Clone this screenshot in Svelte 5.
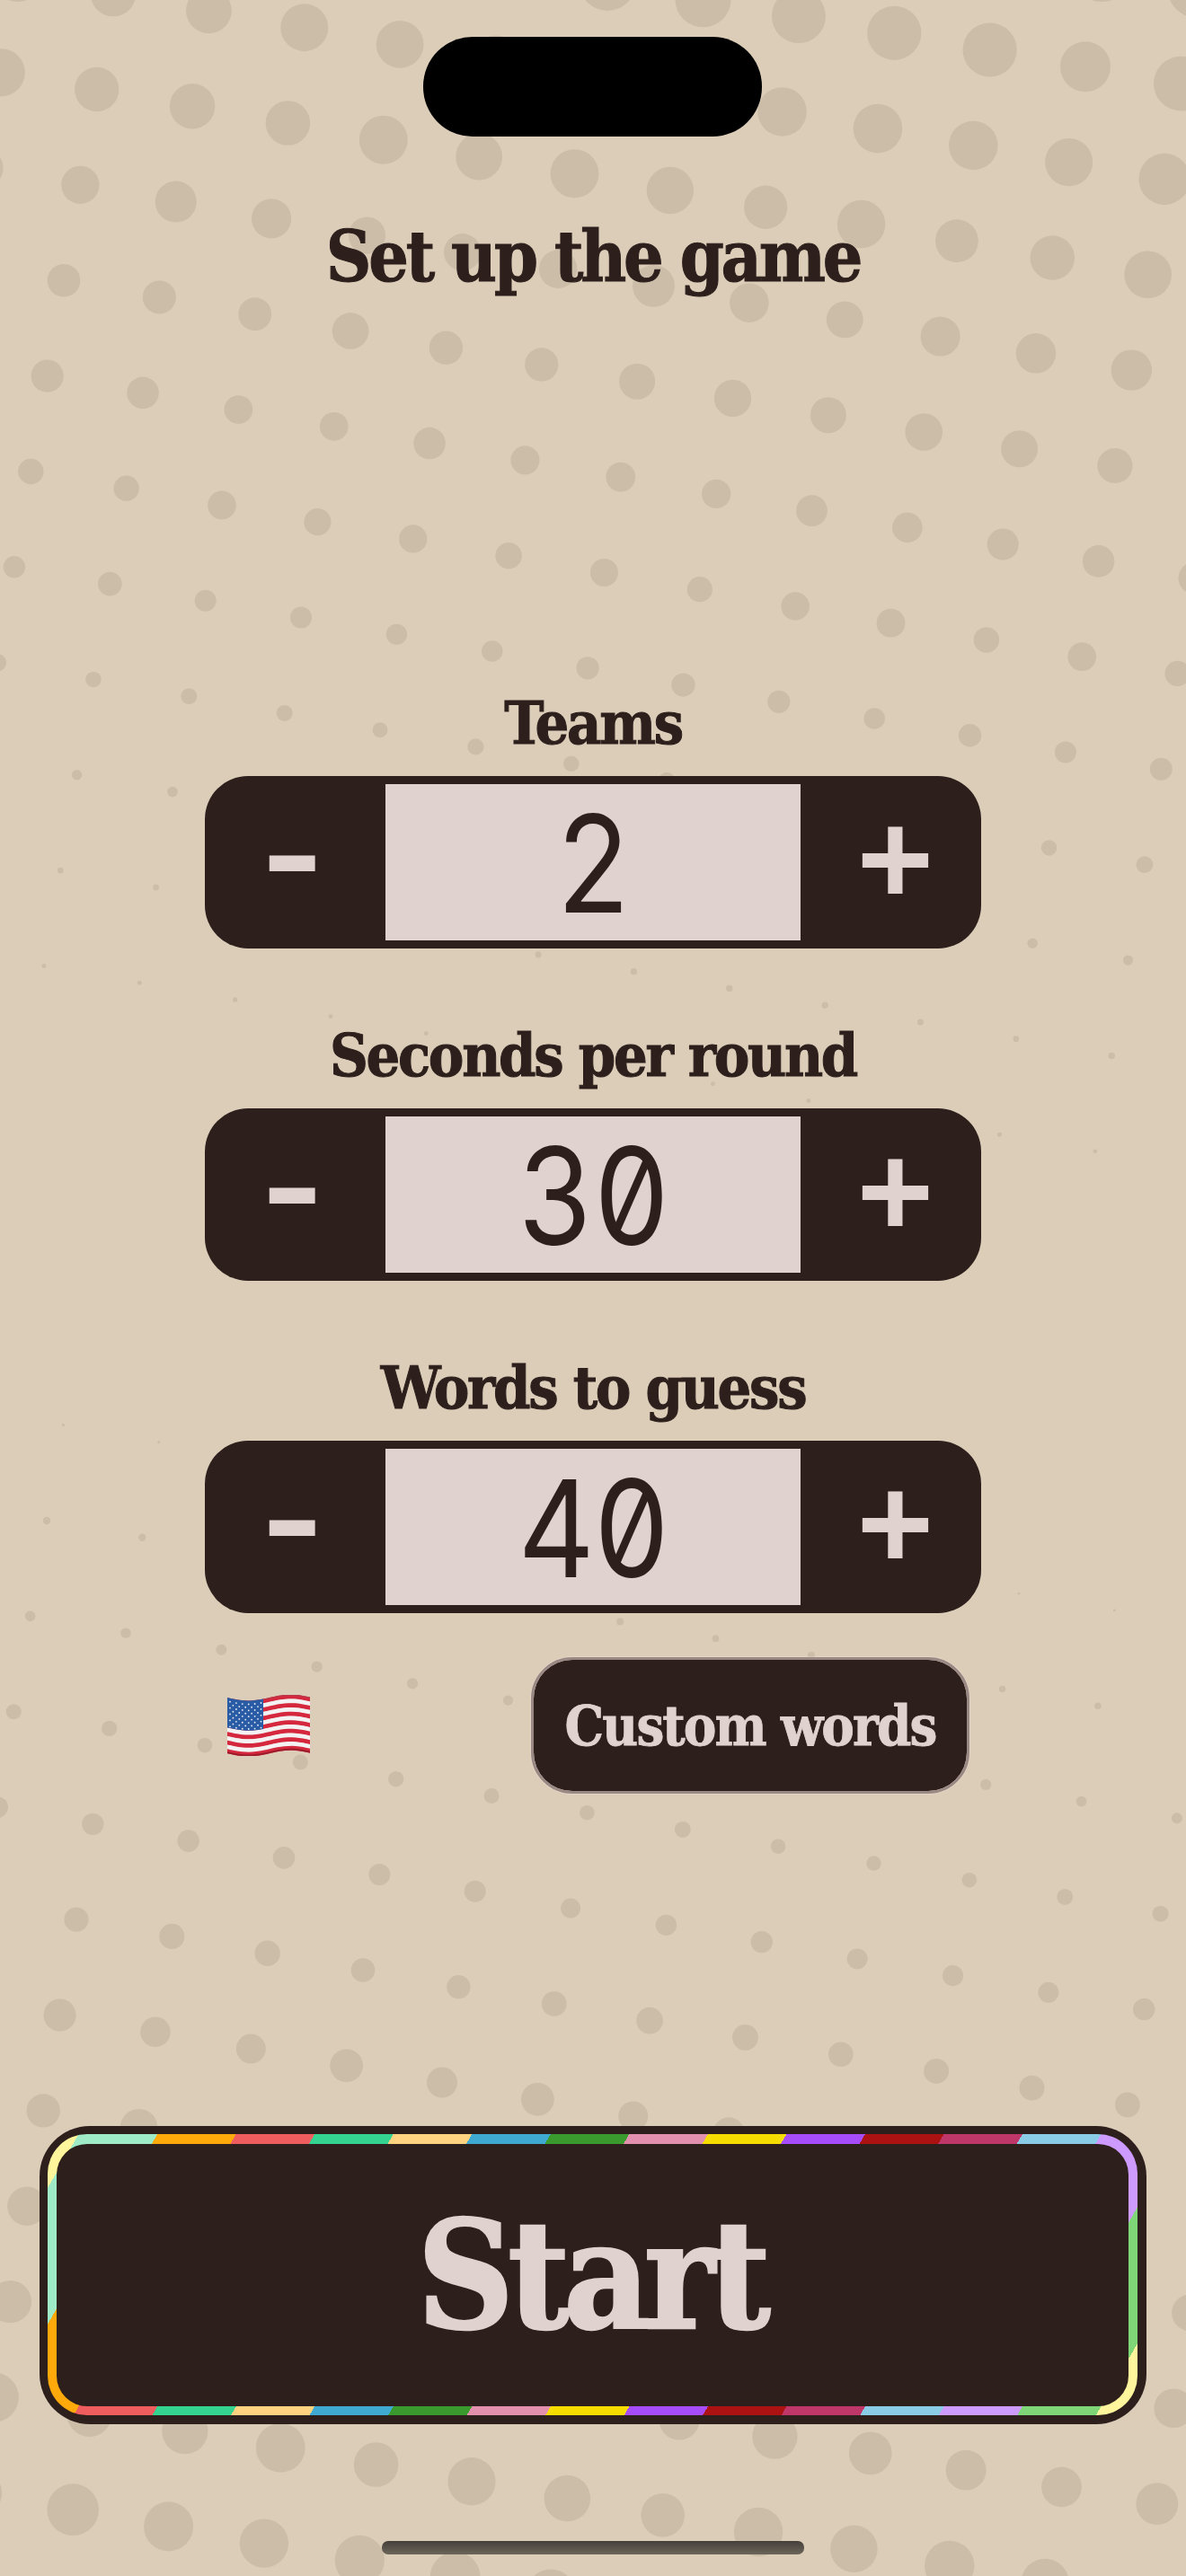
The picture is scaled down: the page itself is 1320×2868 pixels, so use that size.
<script>
  const rows = [[-245,64],[-137,60],[-29,54],[79,51],[187,44],[295,39],[403,34],[511,30],[619,25],[727,18],[835,11],[943,7],[1051,5],[1551,3],[1659,8],[1767,12],[1875,17],[1983,23],[2091,28],[2199,35],[2307,40],[2415,46],[2523,48],[2631,52],[2739,58],[2847,62],[2955,65]];
  const dots = [];
  rows.forEach(([v, d], j) => {
    const step = (v - 79) / 108;
    for (let k = -8; k < 18; k++) {
      const x = 107.7 + k * 106.36 - step * 18.35;
      const y = 99.5 + k * 18.75 + step * 106.36;
      if (x < -50 || x > 1370 || y < -50 || y > 2920) continue;
      const n = Math.sin(k * 12.9898 + j * 78.233) * 43758.5453;
      const jitter = 1 + 0.14 * ((n - Math.floor(n)) - 0.5);
      dots.push({ x, y, r: (d * jitter) / 2 });
    }
  });

  const steppers = [
    { label: 'Teams', value: '2' },
    { label: 'Seconds per round', value: '30' },
    { label: 'Words to guess', value: '40' }
  ];

  const wave = (x) => 3.4 * Math.sin((2 * Math.PI * x) / 94);
  const band = (x0, x1, y0, y1) => {
    let d = `M${x0} ${(y0 + wave(x0)).toFixed(2)}`;
    for (let x = x0 + 4; x <= x1; x += 4) d += `L${x} ${(y0 + wave(x)).toFixed(2)}`;
    for (let x = x1; x >= x0; x -= 4) d += `L${x} ${(y1 + wave(x)).toFixed(2)}`;
    return d + 'Z';
  };
  const stripeH = 62 / 13;
  const stripes = Array.from({ length: 13 }, (_, i) => ({
    d: band(0, 92, 3 + i * stripeH, 3 + (i + 1) * stripeH + 0.2),
    fill: i % 2 ? '#f3f1f2' : '#d5283e'
  }));
  const stars = [];
  for (let r = 0; r < 9; r++) {
    const n = r % 2 ? 5 : 6;
    for (let c = 0; c < n; c++) {
      const x = (r % 2 ? 6.4 : 3) + c * 6.9;
      stars.push({ x, y: 7 + r * 3.45 + wave(x) });
    }
  }
</script>

<main class="page">
  <svg class="dots" width="1320" height="2868" viewBox="0 0 1320 2868" aria-hidden="true">
    {#each dots as dot}
      <circle cx={dot.x} cy={dot.y} r={dot.r} />
    {/each}
  </svg>

  <div class="island"></div>

  <h1>Set up the game</h1>

  <section class="settings">
    {#each steppers as s}
      <div class="setting">
        <h2>{s.label}</h2>
        <div class="stepper">
          <button class="step minus"><span>-</span></button>
          <div class="value"><span>{s.value}</span></div>
          <button class="step plus">+</button>
        </div>
      </div>
    {/each}
  </section>

  <div class="extras">
    <svg class="flag" width="94" height="68" viewBox="0 0 94 68" aria-label="United States">
      {#each stripes as st}
        <path d={st.d} fill={st.fill} />
      {/each}
      <path d={band(0, 40, 3, 3 + 7 * stripeH)} fill="#2a5ca6" />
      {#each stars as star}
        <circle cx={star.x} cy={star.y} r="0.9" fill="#e8edf5" />
      {/each}
      <path d={band(0, 92, 3 + 13 * stripeH - 2, 3 + 13 * stripeH)} fill="#9c1c2c" />
      <path d={band(40, 92, 3, 4.4)} fill="#b9394a" />
    </svg>
    <button class="custom">Custom words</button>
  </div>

  <div class="start-wrap">
    <button class="start">
      <span class="ring"><span class="core">Start</span></span>
    </button>
  </div>

  <div class="home"></div>
</main>

<style>
  :global(body) {
    margin: 0;
  }
  .page {
    position: relative;
    width: 1320px;
    height: 2868px;
    overflow: hidden;
    background: #dccdb8;
    display: flex;
    flex-direction: column;
    align-items: center;
    color: #2c1f1c;
    font-family: "DejaVu Serif Condensed", "DejaVu Serif", serif;
    box-sizing: border-box;
    padding-top: 236px;
  }
  .dots {
    position: absolute;
    inset: 0;
  }
  .dots circle {
    fill: #ccbda8;
  }
  .island {
    position: absolute;
    left: 471px;
    top: 41px;
    width: 377px;
    height: 111px;
    border-radius: 55px;
    background: #000;
  }
  h1,
  h2 {
    position: relative;
    margin: 0;
    font-weight: 700;
    text-align: center;
    white-space: nowrap;
    -webkit-text-stroke: 1px currentColor;
  }
  h1 {
    font-size: 78px;
    line-height: 100px;
    letter-spacing: -3.2px;
  }
  h2 {
    font-size: 66px;
    line-height: 84px;
    letter-spacing: -2.3px;
  }
  .settings {
    position: relative;
    margin-top: 427px;
    display: flex;
    flex-direction: column;
    gap: 77px;
  }
  .setting {
    display: flex;
    flex-direction: column;
    gap: 17px;
    align-items: center;
  }
  .stepper {
    width: 864px;
    height: 192px;
    box-sizing: border-box;
    padding: 9px 0;
    border-radius: 48px;
    background: #2c1f1c;
    display: grid;
    grid-template-columns: 201px 462px 201px;
  }
  .value {
    background: #dfd2cf;
    display: flex;
    align-items: center;
    justify-content: center;
    padding-top: 4px;
  }
  .value span {
    display: inline-block;
    font-family: Inter, "Liberation Sans", sans-serif;
    font-weight: 400;
    font-size: 150px;
    line-height: 170px;
    font-feature-settings: "zero" 1, "tnum" 1;
    letter-spacing: -2px;
    transform: scaleX(0.88);
    color: #2c1f1c;
  }
  button {
    border: 0;
    padding: 0;
    margin: 0;
    background: none;
    color: #dfd2cf;
    font-family: inherit;
  }
  .step {
    font-family: "Liberation Sans", sans-serif;
    font-weight: 700;
    font-size: 146px;
    line-height: 150px;
  }
  .minus {
    padding: 0 6px 22px 0;
  }
  .minus span {
    display: inline-block;
    transform: scaleX(1.37);
  }
  .plus {
    padding: 0 0 6px 10px;
  }
  .extras {
    position: relative;
    width: 864px;
    box-sizing: border-box;
    margin-top: 49px;
    padding: 0 13px 0 25px;
    display: flex;
    align-items: center;
    justify-content: space-between;
  }
  .custom {
    width: 488px;
    height: 152px;
    box-sizing: border-box;
    border: 3px solid #9a8885;
    border-radius: 46px;
    background: #2c1f1c;
    background-clip: padding-box;
    box-shadow: 0 0 0 1px rgba(255, 255, 255, 0.18);
    font-size: 61px;
    font-weight: 700;
    letter-spacing: -1.9px;
    white-space: nowrap;
    -webkit-text-stroke: 0.8px currentColor;
  }
  .start-wrap {
    position: relative;
    margin-top: auto;
    margin-bottom: 169px;
  }
  .start {
    display: block;
    width: 1232px;
    height: 332px;
    box-sizing: border-box;
    padding: 9px 10px 10px 9px;
    background: #2c1f1c;
    border-radius: 56px;
  }
  .ring {
    display: block;
    height: 100%;
    box-sizing: border-box;
    padding: 11px 10px 10px 10px;
    border-radius: 44px;
    background: linear-gradient(
      120deg,
      #fff59d 30px,
      #9febc7 30px 105.8px,
      #ffa90a 105.8px 181.6px,
      #f05d5e 181.6px 257.4px,
      #34d490 257.4px 333.2px,
      #ffd37f 333.2px 409px,
      #3fa9d1 409px 484.8px,
      #3a9a2e 484.8px 560.6px,
      #e290ae 560.6px 636.4px,
      #f7dc00 636.4px 712.2px,
      #a64cfb 712.2px 788px,
      #ac1212 788px 863.8px,
      #be3768 863.8px 939.6px,
      #8acbe5 939.6px 1015.4px,
      #cd9bfd 1015.4px 1091.2px,
      #7fd676 1091.2px 1167px,
      #fff59d 1167px
    );
  }
  .core {
    display: flex;
    align-items: center;
    justify-content: center;
    height: 100%;
    box-sizing: border-box;
    padding-right: 4px;
    border-radius: 34px;
    background: #2c1f1c;
    color: #dfd2cf;
    font-size: 166px;
    font-weight: 700;
    letter-spacing: -7px;
    -webkit-text-stroke: 2.5px currentColor;
  }
  .home {
    position: absolute;
    left: 425px;
    top: 2829px;
    width: 470px;
    height: 15px;
    border-radius: 7px;
    background: linear-gradient(180deg, #45403a, #6b655a);
  }
</style>
